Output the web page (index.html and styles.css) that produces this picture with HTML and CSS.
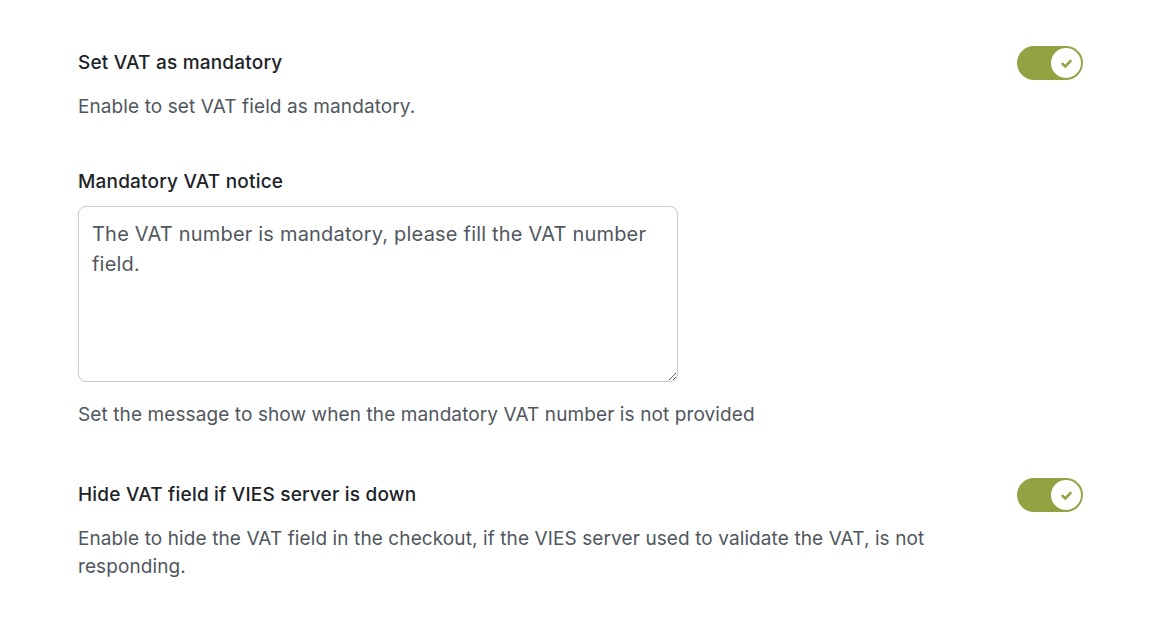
FILE: index.html
```html
<!DOCTYPE html>
<html lang="en">
<head>
<meta charset="utf-8">
<title>VAT settings</title>
<link rel="stylesheet" href="styles.css">
</head>
<body>
<main class="settings">
  <section class="field field-first">
    <div class="field-head">
      <h3 class="field-title">Set VAT as mandatory</h3>
      <span class="toggle" role="switch" aria-checked="true">
        <span class="knob">
          <svg viewBox="0 0 16 16" width="15" height="15" aria-hidden="true"><path d="M3.8 8.4l2.9 2.8 5.6-6" fill="none" stroke="#94a244" stroke-width="2.8" stroke-linecap="round" stroke-linejoin="round"/></svg>
        </span>
      </span>
    </div>
    <p class="field-desc">Enable to set VAT field as mandatory.</p>
  </section>

  <section class="field field-notice">
    <h3 class="field-title">Mandatory VAT notice</h3>
    <textarea class="notice-input">The VAT number is mandatory, please fill the VAT number field.</textarea>
    <p class="field-desc help">Set the message to show when the mandatory VAT number is not provided</p>
  </section>

  <section class="field field-last">
    <div class="field-head">
      <h3 class="field-title">Hide VAT field if VIES server is down</h3>
      <span class="toggle" role="switch" aria-checked="true">
        <span class="knob">
          <svg viewBox="0 0 16 16" width="15" height="15" aria-hidden="true"><path d="M3.8 8.4l2.9 2.8 5.6-6" fill="none" stroke="#94a244" stroke-width="2.8" stroke-linecap="round" stroke-linejoin="round"/></svg>
        </span>
      </span>
    </div>
    <p class="field-desc wide">Enable to hide the VAT field in the checkout, if the VIES server used to validate the VAT, is not responding.</p>
  </section>
</main>
</body>
</html>
```

FILE: styles.css
```css
* { box-sizing: border-box; }
html, body { margin: 0; padding: 0; background: #ffffff; }
body {
  font-family: Inter, "Noto Sans", "Liberation Sans", sans-serif;
  color: #1d2327;
}
.settings {
  padding: 46px 77px 0 78px;
}
.field-head {
  display: flex;
  align-items: center;
  justify-content: space-between;
  height: 34px;
}
.field-title {
  margin: 0;
  font-size: 19px;
  line-height: 28px;
  font-weight: 500;
  letter-spacing: 0.2px;
  color: #1d2327;
}
.field-desc {
  margin: 13px 0 0;
  font-size: 19px;
  line-height: 28px;
  letter-spacing: 0.1px;
  color: #50575e;
}
.field-notice { margin-top: 47px; }
.field-last { margin-top: 49px; }
.wide { max-width: 880px; }
.notice-input {
  display: block;
  width: 600px;
  height: 176px;
  margin-top: 10px;
  padding: 12px 13px;
  border: 1px solid #c9cbcf;
  border-radius: 8px;
  font-family: inherit;
  font-size: 20px;
  line-height: 30px;
  letter-spacing: 0.2px;
  color: #50575e;
  background: #fff;
  resize: vertical;
  outline: none;
}
.field-desc.help { margin-top: 19px; }
.toggle {
  display: flex;
  align-items: center;
  justify-content: flex-end;
  width: 66px;
  height: 34px;
  padding: 2px;
  border-radius: 17px;
  background: #94a244;
  flex: none;
}
.knob {
  display: flex;
  align-items: center;
  justify-content: center;
  width: 30px;
  height: 30px;
  border-radius: 50%;
  background: #ffffff;
}
```
